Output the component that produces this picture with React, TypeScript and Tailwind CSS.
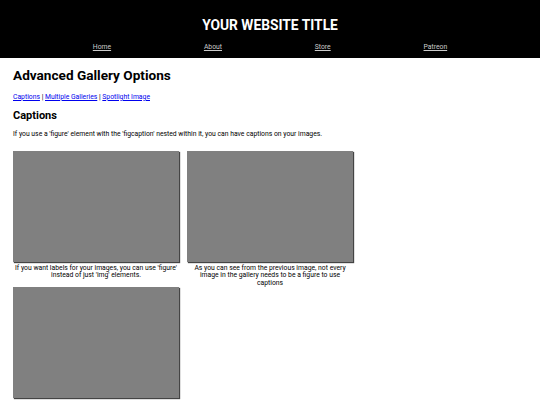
import React from "react";

const Fig = ({ caption }: { caption?: string }) => (
  <figure className="m-0 w-[166px] flex flex-col">
    <div className="w-[166px] h-[111px] bg-[#808080] shadow-[1px_1px_1px_#444]" />
    {caption && (
      <figcaption className="text-[6.8px] leading-[7.3px] text-black text-center mt-[3px] px-[1px]">
        {caption}
      </figcaption>
    )}
  </figure>
);

export default function App() {
  return (
    <div className="w-[540px] min-h-[405px] bg-white" style={{ fontFamily: "Roboto, 'Liberation Sans', sans-serif" }}>
      <header className="bg-black h-[58px] flex flex-col items-center">
        <div className="text-white font-bold text-[13.8px] leading-none mt-[19px]">YOUR WEBSITE TITLE</div>
        <nav className="w-full flex justify-evenly mt-[11px]">
          {["Home", "About", "Store", "Patreon"].map((l) => (
            <a key={l} href="#" className="text-[#cccccc] underline text-[6.8px] leading-none">
              {l}
            </a>
          ))}
        </nav>
      </header>
      <main className="px-[13px]">
        <h1 className="font-bold text-[13.6px] leading-none text-black mt-[11px]">Advanced Gallery Options</h1>
        <div className="text-[6.8px] leading-none mt-[11px] text-black">
          <a href="#" className="text-[#0000ee] underline">Captions</a> |{" "}
          <a href="#" className="text-[#0000ee] underline">Multiple Galleries</a> |{" "}
          <a href="#" className="text-[#0000ee] underline">Spotlight Image</a>
        </div>
        <h2 className="font-bold text-[11px] leading-none text-black mt-[10px]">Captions</h2>
        <p className="text-[6.8px] leading-none text-black mt-[10px]">
          If you use a 'figure' element with the 'figcaption' nested within it, you can have captions on your images.
        </p>
        <div className="mt-[13px] w-[340px] flex flex-wrap gap-x-[8px] gap-y-0 items-start">
          <Fig caption="If you want labels for your images, you can use 'figure' instead of just 'img' elements." />
          <Fig caption="As you can see from the previous image, not every image in the gallery needs to be a figure to use captions" />
          <Fig />
        </div>
      </main>
    </div>
  );
}
